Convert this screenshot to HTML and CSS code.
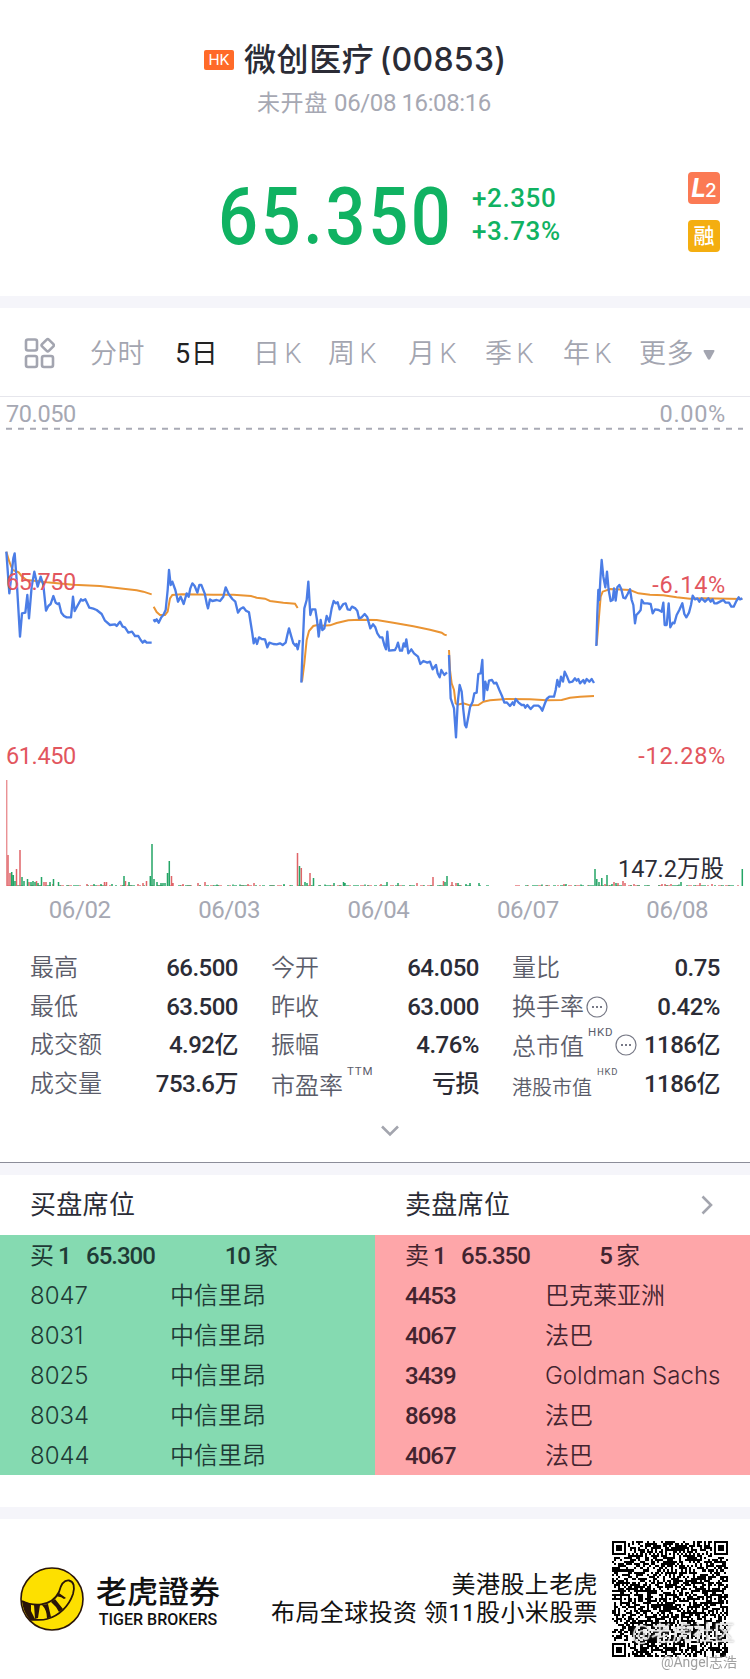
FILE: index.html
```html
<!DOCTYPE html>
<html lang="zh-CN">
<head>
    <meta charset="UTF-8">
    <meta name="viewport" content="width=device-width, initial-scale=1.0">
    <title>微创医疗 (00853)</title>
    <link rel="stylesheet" href="styles.css">
</head>
<body>
    <header class="quote">
        <div class="title">
            <span class="market">HK</span>
            <h1>微创医疗<span class="code">(00853)</span></h1>
        </div>
        <p class="status">未开盘 <span class="num">06/08 16:08:16</span></p>
        <div class="price-row">
            <div class="price">65.350</div>
            <div class="change">
                <span>+2.350</span>
                <span>+3.73%</span>
            </div>
        </div>
        <div class="badges">
            <span class="badge level"><b>L</b>2</span>
            <span class="badge margin">融</span>
        </div>
    </header>

    <nav class="tabs">
        <svg class="grid-icon" viewBox="0 0 32 32" width="32" height="32">
            <rect x="3" y="2.500" width="11" height="11" rx="2"/>
            <rect x="3" y="19" width="11" height="11" rx="2"/>
            <rect x="19" y="19" width="11" height="11" rx="2"/>
            <rect x="20" y="3.500" width="9.500" height="9.500" rx="1.500" transform="rotate(45 24.750 8.250)"/>
        </svg>
        <span>分时</span>
        <span class="active">5日</span>
        <span>日<i>K</i></span>
        <span>周<i>K</i></span>
        <span>月<i>K</i></span>
        <span>季<i>K</i></span>
        <span>年<i>K</i></span>
        <span class="more">更多
            <svg viewBox="0 0 12 10" width="12" height="10"><path d="M1.500 0h9q1.500 0 .8 1.500L7.200 9q-1.200 1.500-2.400 0L.7 1.500Q0 0 1.500 0z"/></svg>
        </span>
    </nav>

    <section class="chart">
        <span class="axis top left">70.050</span>
        <span class="axis top right">0.00%</span>
        <span class="axis mid left down">65.750</span>
        <span class="axis mid right down">-6.14%</span>
        <span class="axis low left down">61.450</span>
        <span class="axis low right down">-12.28%</span>

        <svg class="plot" viewBox="0 0 2250 1479" width="750" height="493">
            <path class="limit" d="M18 95.500H2229"/>
            <!-- average price -->
            <g class="avg">
                <g transform="translate(0 399)">
                    <polyline points="19,65 28,95 38,120 56,127 66,140 80,150 110,153 140,157 220,164 300,168 370,176 410,181 430,185 455,193"/>
                    <polyline points="461,230 470,246 480,255 495,255 503,245 510,205 517,195 545,193 640,194 700,194 753,198 770,203 795,206 810,213 850,218 885,221 893,234"/>
                </g>
                <g transform="translate(870 399)">
                    <polyline points="36,455 43,400 50,330 57,303 70,288 85,284 95,287 120,286 140,279 175,271 210,269 260,270 310,278 370,289 420,299 455,308 463,314 470,316"/>
                    <polyline points="477,360 480,420 485,460 492,480 497,520 503,524 520,520 540,526 565,525 580,515 600,511 650,507 720,508 770,511 815,510 840,503 870,500 912,498"/>
                </g>
                <g transform="translate(1680 399)">
                    <polyline points="110,345 117,260 122,200 128,185 150,177 210,180 235,190 270,194 310,196 350,202 390,206 430,205 547,207"/>
                </g>
            </g>
            <!-- last price -->
            <g class="line">
                <g transform="translate(0 399)">
                    <polyline points="19,65 28,190 40,85 44,70 50,150 60,320 66,250 76,248 82,195 87,265 95,170 103,125 113,170 122,140 130,165 138,242 145,228 152,222 160,198 167,218 173,222 177,220 184,248 192,258 200,262 213,262 219,200 224,243 232,228 243,208 248,212 256,208 268,233 280,236 290,240 305,252 315,272 330,285 345,283 350,288 360,275 368,290 375,292 385,308 396,305 405,318 415,318 422,330 428,338 434,332 440,338 455,338"/>
                    <polyline points="461,268 464,274 470,268 476,278 484,262 490,255 497,240 503,180 507,120 512,165 517,155 526,180 534,215 542,200 551,222 560,190 566,200 571,175 577,160 584,168 592,188 598,165 604,165 614,190 620,220 624,235 630,208 637,213 650,210 660,213 670,200 677,172 686,192 697,207 706,215 714,248 721,237 730,232 738,242 747,247 753,285 757,310 761,340 766,325 771,342 777,322 785,327 795,328 802,352 808,338 820,342 830,343 840,340 848,345 857,338 862,315 867,295 874,320 880,340 886,347 889,342 893,358 899,330"/>
                </g>
                <g transform="translate(870 399)">
                    <polyline points="34,458 38,350 43,235 50,210 55,155 61,255 66,238 76,238 81,270 86,320 92,270 97,300 103,295 110,258 118,275 125,235 131,213 137,220 143,217 149,238 160,222 167,220 173,238 180,240 186,230 196,235 202,243 207,265 215,262 224,252 232,262 241,295 249,283 256,292 262,310 270,322 277,322 283,345 288,358 292,305 297,362 315,360 320,350 324,338 330,362 336,362 341,340 345,350 349,328 355,370 364,358 372,370 384,380 391,402 400,393 412,398 420,395 428,418 438,405 443,430 449,442 454,420 463,435 471,427"/>
                    <polyline points="477,375 482,505 492,535 498,622 503,520 509,465 515,485 520,540 525,585 529,592 535,560 540,532 548,515 553,490 560,488 565,432 572,430 577,390 581,510 586,455 592,480 597,452 606,450 612,460 619,458 628,480 636,498 643,518 650,517 660,528 668,517 672,525 677,507 685,517 695,525 702,525 706,533 712,525 722,537 731,527 745,527 751,532 757,542 763,525 770,507 778,500 792,500 797,480 802,450 808,470 813,440 819,455 824,425 832,442 838,457 847,455 855,445 860,452 865,447 870,460 880,450 884,460 890,447 898,455 905,447 912,459"/>
                </g>
                <g transform="translate(1680 399)">
                    <polyline points="109,348 112,250 115,180 118,210 121,150 125,90 130,140 136,172 141,125 146,180 152,213 158,210 162,175 167,212 172,172 178,165 184,178 190,203 196,205 203,192 210,178 215,210 220,225 225,280 229,255 236,248 242,240 245,210 252,220 262,220 272,222 278,250 285,238 296,240 305,245 310,218 314,285 320,285 326,220 331,292 338,278 343,280 350,255 358,240 367,220 373,252 379,262 387,248 393,225 398,197 405,208 412,205 418,215 425,205 435,215 445,205 452,215 458,208 463,220 470,220 480,215 490,210 497,218 507,218 514,230 521,230 528,215 536,202 540,208 547,205"/>
                </g>
            </g>
            <!-- volume -->
            <g class="volume" transform="scale(3)">
                <path class="sell base" d="M7 488.500H480M515 488.500H743"/>
                <path class="buy base" d="M10 488.500H490M525 488.500H743"/>
                <path class="sell first" d="M6.800 489v-106"/>
                <path class="sell" d="M8 489v-31M10 489v-13M16.500 489v-17M20 489v-36M29 489v-4M36.500 489v-5M44 489v-4M46 489v-4M53 489v-2M87 489v-2M104.500 489v-4M106.500 489v-4M125.500 489v-5M138 489v-2M143 489v-3M146.500 489v-5M171.500 489v-10M173 489v-3M183 489v-2M198 489v-3M205 489v-4M248 489v-2M254 489v-3M297.500 489v-33M301.300 489v-18M310 489v-13M381 489v-2M417 489v-3M433 489v-9M443.500 489v-5M452 489v-4M456 489v-3M564 489v-2M605 489v-2M614 489v-4M618 489v-3M623 489v-5M625 489v-3M634 489v-2M662 489v-2M665 489v-2M671 489v-2M700 489v-3M712 489v-2"/>
                <path class="buy" d="M11.700 489v-14M13.300 489v-11M15 489v-5M22 489v-9M24 489v-5M27.500 489v-7M31 489v-4M33 489v-5M35 489v-4M38 489v-3M41.500 489v-9M50 489v-4M53.500 489v-7M58.500 489v-4M94 489v-2M101 489v-2M112 489v-2M124 489v-10M129 489v-4M150.300 489v-10M152 489v-42M154 489v-7M157 489v-4M161 489v-3M163 489v-3M165 489v-3M167.500 489v-13M169.300 489v-25M217 489v-1.500M233 489v-1.500M240 489v-1.500M284 489v-2M299.500 489v-20M305 489v-4M307 489v-3M313.500 489v-8M325 489v-1.500M334 489v-3M343.500 489v-4M345 489v-3M365 489v-1.500M387 489v-4M398 489v-3M445 489v-4M447 489v-10M458 489v-3M466 489v-2M470 489v-3M479 489v-3M542 489v-1.500M566 489v-2M581 489v-1.500M595 489v-17M596.800 489v-7M599 489v-4M601.800 489v-8M607 489v-11M612 489v-2M616 489v-3M679 489v-1.500M681 489v-4M742.300 489v-17"/>
            </g>
        </svg>
        <span class="axis shares">147.2万股</span>
    </section>
    <div class="dates">
        <span>06/02</span><span>06/03</span><span>06/04</span><span>06/07</span><span>06/08</span>
    </div>

    <section class="stats">
        <dl><dt>最高</dt><dd>66.500</dd></dl>
        <dl><dt>今开</dt><dd>64.050</dd></dl>
        <dl><dt>量比</dt><dd>0.75</dd></dl>
        <dl><dt>最低</dt><dd>63.500</dd></dl>
        <dl><dt>昨收</dt><dd>63.000</dd></dl>
        <dl><dt>换手率<svg class="info" viewBox="0 0 22 22" width="22" height="22"><circle cx="11" cy="11" r="10"/><path d="M6 11h2M10 11h2M14 11h2"/></svg></dt><dd>0.42%</dd></dl>
        <dl><dt>成交额</dt><dd>4.92亿</dd></dl>
        <dl><dt>振幅</dt><dd>4.76%</dd></dl>
        <dl><dt><span class="drop">总市值</span><sup>HKD</sup><svg class="info" viewBox="0 0 22 22" width="22" height="22"><circle cx="11" cy="11" r="10"/><path d="M6 11h2M10 11h2M14 11h2"/></svg></dt><dd>1186亿</dd></dl>
        <dl><dt>成交量</dt><dd>753.6万</dd></dl>
        <dl><dt><span class="drop">市盈率</span><sup>TTM</sup></dt><dd>亏损</dd></dl>
        <dl class="small"><dt><span class="drop">港股市值</span><sup>HKD</sup></dt><dd>1186亿</dd></dl>
    </section>
    <div class="expand">
        <svg viewBox="0 0 20 12" width="20" height="12"><path d="M2 1.500l8 8 8-8"/></svg>
    </div>

    <section class="seats">
        <div class="seats-head">
            <h2>买盘席位</h2>
            <h2>卖盘席位</h2>
            <svg viewBox="0 0 12 20" width="12" height="20"><path d="M1.500 1.500l8.500 8.500-8.500 8.500"/></svg>
        </div>
        <div class="seats-body">
            <div class="side bid">
                <div class="level-row"><span>买<b>1</b></span><b>65.300</b><span class="count"><b>10</b>家</span></div>
                <div class="broker"><span>8047</span><span>中信里昂</span></div>
                <div class="broker"><span>8031</span><span>中信里昂</span></div>
                <div class="broker"><span>8025</span><span>中信里昂</span></div>
                <div class="broker"><span>8034</span><span>中信里昂</span></div>
                <div class="broker"><span>8044</span><span>中信里昂</span></div>
            </div>
            <div class="side ask">
                <div class="level-row"><span>卖<b>1</b></span><b>65.350</b><span class="count"><b>5</b>家</span></div>
                <div class="broker"><b>4453</b><span>巴克莱亚洲</span></div>
                <div class="broker"><b>4067</b><span>法巴</span></div>
                <div class="broker"><b>3439</b><span>Goldman Sachs</span></div>
                <div class="broker"><b>8698</b><span>法巴</span></div>
                <div class="broker"><b>4067</b><span>法巴</span></div>
            </div>
        </div>
    </section>

    <footer class="footer">
        <svg class="logo" viewBox="0 0 64 64" width="64" height="64">
            <circle cx="32" cy="32" r="31" fill="#fde000" stroke="#2a1508" stroke-width="1.600"/>
            <path d="M2 34C12 39 31 41 39 25C41 17 45 13 49 13.500C54 14.500 55 20 53 27C49 39 39 49 27 52C20 54 13 52 10 53" fill="none" stroke="#2a1508" stroke-width="1.800"/>
            <path d="M2 34L11 37L11 44L15 52L10 53Q3 45 2 34zM14 37.500L20 38L18 51L15 52zM22 38L28 37L31 50L27 51.500Q27 43 22 38zM31 35L35 32L43 42L39 45Q36 39 31 35zM36.500 29.500L39 26L46 31L44 32Q41 29 36.500 29.500z" fill="#2a1508"/>
        </svg>
        <div class="brand">
            <strong>老虎證券</strong>
            <span>TIGER BROKERS</span>
        </div>
        <p class="slogan">美港股上老虎<br>布局全球投资 领11股小米股票</p>
        <div class="qr">
            <canvas id="qr" width="116" height="116"></canvas>
            <span class="mark community">@老虎社区</span>
            <span class="mark user">@Angel志浩</span>
        </div>
    </footer>
    <script src="script.js"></script>
</body>
</html>
```

FILE: styles.css
```css
* {
    box-sizing: border-box;
}
body {
    margin: 0;
    width: 750px;
    height: 1679px;
    background: #fff;
    color: #2b2c36;
    font-family: Roboto, 'Noto Sans CJK SC', sans-serif;
    overflow: hidden;
}
h1, h2, p, dl, dt, dd {
    margin: 0;
    font-weight: 400;
}
b, i {
    font-style: normal;
    font-weight: 500;
}

/* quote header */
.quote {
    position: relative;
    height: 308px;
    padding-top: 36px;
    border-bottom: 12px solid #f5f5fa;
}
.title {
    display: flex;
    align-items: center;
    height: 48px;
    padding-left: 204px;
}
.market {
    width: 30px;
    height: 20px;
    margin-right: 10px;
    border-radius: 2px;
    background: #ff6a28;
    color: #fff;
    font: 15px/20px Inter, sans-serif;
    text-align: center;
}
.title h1 {
    font-size: 32px;
    line-height: 48px;
    font-weight: 500;
    letter-spacing: 0.6px;
}
.title .code {
    margin-left: 5px;
    font-family: Inter, sans-serif;
    letter-spacing: 0.3px;
}
.status {
    margin-top: 1px;
    padding-left: 257px;
    color: #a6a8b3;
    font-size: 23px;
    line-height: 36px;
    letter-spacing: 0.6px;
}
.status .num {
    font-size: 24px;
    letter-spacing: -0.4px;
}
.price-row {
    display: flex;
    align-items: center;
    height: 94px;
    margin-top: 48px;
    padding-left: 218px;
    color: #10b262;
    font-weight: 500;
}
.price {
    width: 254px;
    font-size: 80px;
    line-height: 94px;
    font-weight: 500;
    letter-spacing: 3px;
    transform: scaleX(0.88);
    transform-origin: left;
}
.change {
    display: flex;
    flex-direction: column;
    margin-top: -5px;
    font-size: 26px;
    line-height: 33px;
    letter-spacing: 0.6px;
}
.badges {
    position: absolute;
    top: 172px;
    right: 30px;
    display: flex;
    flex-direction: column;
    gap: 16px;
}
.badge {
    width: 32px;
    height: 32px;
    border-radius: 4px;
    color: #fff;
    text-align: center;
    line-height: 32px;
}
.level {
    background: #fb7a54;
    font: 500 19px/32px Inter, sans-serif;
}
.level b {
    font-size: 26px;
    font-style: italic;
    font-weight: 700;
    letter-spacing: -1px;
}
.margin {
    background: #f4ae10;
    font-size: 21px;
    font-weight: 500;
}

/* period tabs */
.tabs {
    display: grid;
    grid-template-columns: 67px 85px 78px 75px 80px 77px 78px 76px 1fr;
    align-items: center;
    height: 89px;
    padding-left: 23px;
    border-bottom: 1px solid #e6e6ec;
    color: #a3a5b0;
    font-size: 27px;
    line-height: 38px;
    font-weight: 350;
    white-space: nowrap;
}
.tabs span {
    margin-top: 4px;
    letter-spacing: 0.6px;
}
.tabs i {
    margin-left: 4px;
    font-weight: 350;
}
.tabs .active {
    color: #222;
    font-weight: 400;
}
.tabs .more svg {
    margin-left: 2px;
    vertical-align: 3px;
    fill: #a3a5b0;
}
.grid-icon {
    margin-top: 2px;
    fill: none;
    stroke: #a3a5b0;
    stroke-width: 2.6;
}

/* chart */
.chart {
    position: relative;
    height: 493px;
}
.plot {
    display: block;
    fill: none;
}
.axis {
    position: absolute;
    font-size: 23.5px;
    line-height: 28px;
    color: #a6a8b3;
    letter-spacing: -0.4px;
}
.left { left: 6px; }
.right {
    right: 24px;
    letter-spacing: 0.7px;
}
.top { top: 3px; }
.mid { top: 171px; }
.mid.right { top: 174px; }
.low { top: 345px; }
.down { color: #e2565e; }
.limit {
    stroke: #a9aab5;
    stroke-width: 6;
    stroke-dasharray: 18;
}
.avg {
    stroke: #ea9433;
    stroke-width: 6;
}
.line {
    stroke: #4b7de6;
    stroke-width: 7;
    stroke-linejoin: round;
}
.volume {
    stroke-width: 1.5;
}
.sell { stroke: #e06468; }
.buy { stroke: #24a566; }
.sell.first { stroke-width: 1; }
.base {
    stroke-width: 1;
    opacity: 0.65;
}
.sell.base { stroke-dasharray: 5 7 2 9 4 3; }
.buy.base { stroke-dasharray: 3 4 6 8 2 5; }
.axis.shares {
    right: 26px;
    top: 458px;
    color: #2b2c36;
    letter-spacing: 0;
}
.dates {
    display: grid;
    grid-template-columns: repeat(5, 149.4px);
    height: 59px;
    padding-left: 5px;
    color: #a6a8b3;
    font-size: 24px;
    line-height: 40px;
    letter-spacing: -0.4px;
    text-align: center;
}

/* key figures */
.stats {
    display: grid;
    grid-template-columns: repeat(3, 208px);
    grid-auto-rows: 38.5px;
    column-gap: 33px;
    padding-left: 30px;
    height: 155px;
}
.stats dl {
    display: flex;
    justify-content: space-between;
    align-items: center;
    white-space: nowrap;
}
.stats dt {
    display: flex;
    align-items: center;
    color: #5b5d6a;
    font-size: 24px;
    line-height: 38px;
    font-weight: 350;
}
.stats dd {
    font-size: 24px;
    line-height: 38px;
    font-weight: 500;
    letter-spacing: -0.5px;
}
.stats .drop {
    padding-top: 4px;
}
.stats sup {
    align-self: flex-start;
    margin: -4px 0 0 4px;
    font-size: 11.5px;
    line-height: 24px;
    letter-spacing: 0.8px;
    font-weight: 400;
}
.stats .small .drop {
    padding-top: 8px;
    font-size: 20px;
}
.stats .small sup {
    margin: -1px 0 0 5px;
    font-size: 9.5px;
}
.info {
    margin-left: 2px;
    fill: none;
    stroke: #777986;
    stroke-width: 1.2;
}
.info path {
    stroke-width: 2;
}
.expand {
    display: flex;
    justify-content: center;
    height: 59px;
    padding: 21px 0 0 30px;
    border-bottom: 1px solid #8c8d99;
}
.expand svg, .seats-head svg {
    fill: none;
    stroke: #a3a5ae;
    stroke-width: 2.6;
}

/* broker queue */
.seats {
    border-top: 12px solid #f5f5fa;
    border-bottom: 12px solid #f5f5fa;
    height: 356px;
}
.seats-head {
    display: flex;
    align-items: center;
    height: 60px;
    padding: 0 37px 0 30px;
}
.seats-head h2 {
    width: 375px;
    font-size: 26px;
    line-height: 62px;
    letter-spacing: 0.3px;
}
.seats-head svg {
    flex-shrink: 0;
    margin-left: auto;
}
.seats-head h2 + h2 {
    width: 200px;
}
.seats-body {
    display: grid;
    grid-template-columns: 1fr 1fr;
}
.side {
    padding-left: 30px;
    font-size: 24px;
    line-height: 42px;
    white-space: nowrap;
}
.bid {
    background: #85dab1;
    color: #1f3a36;
}
.ask {
    background: #fea6a9;
    color: #43242f;
}
.side b {
    letter-spacing: -1px;
}
.level-row {
    display: grid;
    grid-template-columns: 56px 90px 102px;
    height: 40px;
}
.ask .level-row {
    grid-template-columns: 56px 90px 89px;
}
.level-row span b {
    margin-left: 4px;
}
.level-row .count {
    text-align: right;
}
.level-row .count b {
    margin: 0 4px 0 0;
}
.broker {
    display: grid;
    grid-template-columns: 140px 1fr;
    height: 40px;
}
.broker span {
    font-family: Inter, 'Noto Sans CJK SC', sans-serif;
    font-weight: 350;
}

/* footer */
.footer {
    display: flex;
    align-items: flex-start;
    height: 160px;
    padding: 22px 22px 0 20px;
    color: #111;
}
.logo {
    margin-top: 26px;
}
.brand {
    display: flex;
    flex-direction: column;
    align-items: center;
    width: 126px;
    margin: 27px 0 0 11px;
}
.brand strong {
    font-family: 'Noto Sans CJK TC', sans-serif;
    font-size: 31px;
    font-weight: 500;
    line-height: 44px;
}
.brand span {
    margin-top: -1px;
    font-size: 16px;
    font-weight: 500;
    line-height: 18px;
    white-space: nowrap;
}
.slogan {
    flex: 1;
    padding-top: 30px;
    font-size: 24px;
    line-height: 28px;
    letter-spacing: 0.4px;
    text-align: right;
    white-space: nowrap;
}
.qr {
    position: relative;
    width: 116px;
    height: 116px;
    margin-left: 14px;
}
.qr canvas {
    display: block;
}
.mark {
    position: absolute;
    white-space: nowrap;
}
.community {
    left: 20px;
    top: 79px;
    font-size: 21px;
    line-height: 26px;
    color: rgba(255, 255, 255, 0.75);
    text-shadow: 0 0 2px #999;
}
.user {
    right: -9px;
    top: 111px;
    font-size: 14px;
    line-height: 20px;
    color: #a0a0a0;
    text-shadow: 0 0 2px #fff;
}
```

FILE: script.js
```javascript
// 57 x 57 modules
const size = 57;
const canvas = document.getElementById('qr');
const ctx = canvas.getContext('2d');
const unit = canvas.width / size;
let seed = 853;

function random() {
    seed = (seed * 1103515245 + 12345) % 2147483648;
    return seed / 2147483648;
}

function square(x, y, n, color) {
    const left = Math.round(x * unit);
    const top = Math.round(y * unit);
    ctx.fillStyle = color;
    ctx.fillRect(left, top, Math.round((x + n) * unit) - left, Math.round((y + n) * unit) - top);
}

square(0, 0, size, '#fff');
for (let y = 0; y < size; y++) {
    for (let x = 0; x < size; x++) {
        if (random() < 0.55) square(x, y, 1, '#000');
    }
}

// timing patterns
for (let i = 8; i < size - 8; i++) {
    square(i, 6, 1, i % 2 ? '#fff' : '#000');
    square(6, i, 1, i % 2 ? '#fff' : '#000');
}

// alignment patterns
[[28, 6], [6, 28], [28, 28], [50, 28], [28, 50], [50, 50]].forEach(([x, y]) => {
    square(x - 2, y - 2, 5, '#000');
    square(x - 1, y - 1, 3, '#fff');
    square(x, y, 1, '#000');
});

// finder patterns
[[0, 0], [size - 7, 0], [0, size - 7]].forEach(([x, y]) => {
    square(x ? x - 1 : 0, y ? y - 1 : 0, 8, '#fff');
    square(x, y, 7, '#000');
    square(x + 1, y + 1, 5, '#fff');
    square(x + 2, y + 2, 3, '#000');
});
```
